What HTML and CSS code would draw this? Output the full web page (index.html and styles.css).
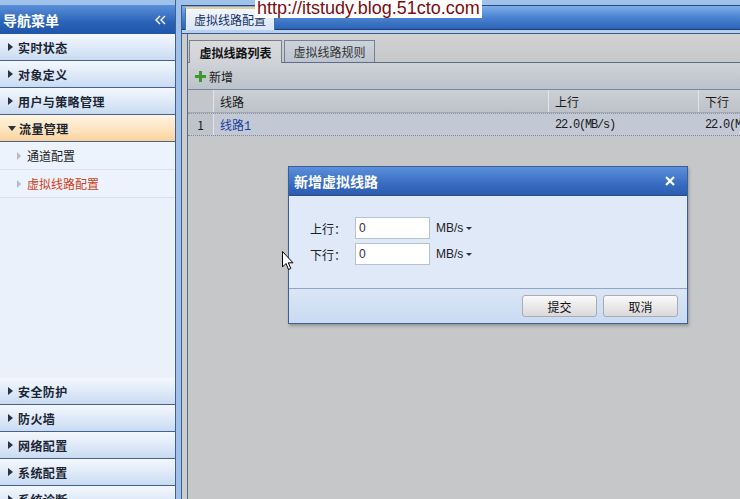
FILE: index.html
```html
<!DOCTYPE html>
<html lang="zh-CN">
<head>
    <meta charset="UTF-8">
    <title>虚拟线路配置</title>
    <link rel="stylesheet" href="styles.css">
</head>
<body>

    <div class="app">
        <!-- left navigation -->
        <aside class="sidebar">
            <div class="nav-head">
                <span>导航菜单</span>
                <svg class="collapse" width="12" height="10" viewBox="0 0 12 10">
                    <path d="M5 1 L1 5 L5 9 M10 1 L6 5 L10 9" fill="none" stroke="#fff" stroke-width="1.4"/>
                </svg>
            </div>
            <div class="nav-item"><i class="arrow"></i>实时状态</div>
            <div class="nav-item"><i class="arrow"></i>对象定义</div>
            <div class="nav-item"><i class="arrow"></i>用户与策略管理</div>
            <div class="nav-item open"><i class="arrow down"></i>流量管理</div>
            <ul class="sub-list">
                <li><i class="sub-arrow"></i>通道配置</li>
                <li class="current"><i class="sub-arrow"></i>虚拟线路配置</li>
            </ul>
            <div class="nav-fill"></div>
            <div class="nav-item"><i class="arrow"></i>安全防护</div>
            <div class="nav-item"><i class="arrow"></i>防火墙</div>
            <div class="nav-item"><i class="arrow"></i>网络配置</div>
            <div class="nav-item"><i class="arrow"></i>系统配置</div>
            <div class="nav-item"><i class="arrow"></i>系统诊断</div>
        </aside>

        <!-- main tab area -->
        <section class="main">
            <div class="tabbar">
                <div class="tab">虚拟线路配置</div>
            </div>
            <div class="tabbar-foot"></div>
            <div class="main-body">
                <div class="panel">
                    <div class="subtabs">
                        <div class="subtab active">虚拟线路列表</div>
                        <div class="subtab">虚拟线路规则</div>
                    </div>
                    <div class="toolbar">
                        <span class="tool-btn">
                            <svg width="11" height="11" viewBox="0 0 11 11">
                                <rect x="4" y="0" width="3" height="11" fill="#3c9a2c"/>
                                <rect x="0" y="4" width="11" height="3" fill="#3c9a2c"/>
                            </svg>
                            新增
                        </span>
                    </div>
                    <div class="grid">
                        <div class="grid-row grid-head">
                            <div class="cell num"></div>
                            <div class="cell c-line">线路</div>
                            <div class="cell c-up">上行</div>
                            <div class="cell c-down">下行</div>
                        </div>
                        <div class="grid-row selected">
                            <div class="cell num">1</div>
                            <div class="cell c-line"><span class="link">线路<span class="mono">1</span></span></div>
                            <div class="cell c-up mono">22.0(MB/s)</div>
                            <div class="cell c-down mono">22.0(MB/s)</div>
                        </div>
                    </div>
                </div>
            </div>
        </section>
    </div>

    <!-- add dialog -->
    <div class="dialog">
        <div class="dialog-head">
            <span>新增虚拟线路</span>
            <svg class="close" width="10" height="10" viewBox="0 0 10 10">
                <path d="M1 1 L9 9 M9 1 L1 9" stroke="#fff" stroke-width="2.2"/>
            </svg>
        </div>
        <div class="dialog-body">
            <div class="form-row">
                <label>上行：</label>
                <input type="text" value="0">
                <span class="unit">MB/s <i class="caret"></i></span>
            </div>
            <div class="form-row">
                <label>下行：</label>
                <input type="text" value="0">
                <span class="unit">MB/s <i class="caret"></i></span>
            </div>
        </div>
        <div class="dialog-foot">
            <button type="button">提交</button>
            <button type="button">取消</button>
        </div>
    </div>

    <div class="watermark">http://itstudy.blog.51cto.com</div>

    <svg class="cursor" width="12" height="20" viewBox="0 0 12 20">
        <path d="M0.5 0.5 L0.5 16 L4 12.5 L6.5 18.5 L8.8 17.5 L6.3 11.8 L11 11.8 Z" fill="#fff" stroke="#000" stroke-width="1"/>
    </svg>

</body>
</html>
```

FILE: styles.css
```css
body {
    margin: 0;
    background: #9fc1ea;
    font-family: "Noto Sans CJK SC", "Liberation Sans", sans-serif;
    font-size: 12px;
    color: #1a1a1a;
    overflow: hidden;
    height: 499px;
}

.app {
    display: flex;
    height: 513px;
}

/* ---------- sidebar ---------- */

.sidebar {
    width: 175px;
    border-right: 1px solid #3f5f8c;
    display: flex;
    flex-direction: column;
    padding-top: 5px;
    background: #9fc1ea;
}

.nav-head {
    height: 29px;
    display: flex;
    align-items: center;
    justify-content: space-between;
    padding: 0 8px 0 3px;
    background: linear-gradient(#5a90d9, #2a62b7 60%, #1f56aa);
    color: #fff;
    font-size: 14px;
    font-weight: bold;
}

.nav-item {
    height: 26px;
    border-bottom: 1px solid #44638c;
    background: linear-gradient(#f4f8fe, #dbe7f7 60%, #c9dbf2);
    display: flex;
    align-items: center;
    padding-left: 8px;
    font-weight: bold;
    font-size: 12px;
    letter-spacing: 0.4px;
    color: #1b2433;
    flex-shrink: 0;
}

.nav-item.open {
    background: linear-gradient(#fff4e2, #fde2bb 60%, #f9d29c);
}

.arrow {
    width: 0;
    height: 0;
    border-top: 4px solid transparent;
    border-bottom: 4px solid transparent;
    border-left: 5px solid #2b3240;
    margin-right: 5px;
}

.arrow.down {
    border-left: 4px solid transparent;
    border-right: 4px solid transparent;
    border-top: 5px solid #2b3240;
    border-bottom: 0;
    margin-right: 3px;
}

.sub-list {
    list-style: none;
    margin: 0;
    padding: 0;
    background: #edf3fc;
}

.sub-list li {
    height: 27px;
    border-bottom: 1px solid #d6e0ee;
    display: flex;
    align-items: center;
    padding-left: 17px;
    color: #222;
}

.sub-list li.current {
    color: #cf3f1a;
}

.sub-arrow {
    width: 0;
    height: 0;
    border-top: 4px solid transparent;
    border-bottom: 4px solid transparent;
    border-left: 4px solid #b5bcc8;
    margin-right: 6px;
}

.nav-fill {
    flex: 1;
    background: #eaf1fb;
}

/* ---------- main area ---------- */

.main {
    flex: 1;
    margin-left: 5px;
    margin-top: 5px;
    border-left: 1px solid #3f5f8c;
    border-top: 1px solid #2b4a7a;
    display: flex;
    flex-direction: column;
    overflow: hidden;
}

.tabbar {
    height: 23px;
    border-bottom: 1px solid #1f3f70;
    background: linear-gradient(#7fadea, #4a83d2 50%, #2c63b6);
    display: flex;
    align-items: flex-end;
    padding-left: 3px;
}

.tab {
    width: 90px;
    height: 23px;
    margin-bottom: -1px;
    box-sizing: border-box;
    border: 1px solid #4a6fa6;
    border-bottom: 0;
    border-top: 2px solid #e9cf8f;
    background: linear-gradient(#f2f6fc, #d9e6f7);
    color: #15325f;
    display: flex;
    align-items: center;
    justify-content: center;
}

.tabbar-foot {
    height: 3px;
    background: #b7d0f0;
    border-bottom: 1px solid #3a5886;
}

.main-body {
    flex: 1;
    background: #cbccce;
    padding-left: 5px;
    display: flex;
}

.panel {
    flex: 1;
    border-left: 1px solid #56698a;
    background: #c6c7c9;
    overflow: hidden;
}

.subtabs {
    height: 28px;
    border-bottom: 1px solid #5d6d86;
    background: linear-gradient(#d1d2d4, #c6c7c9);
    display: flex;
    align-items: flex-end;
    padding-left: 1px;
}

.subtab {
    width: 91px;
    height: 22px;
    box-sizing: border-box;
    border: 1px solid #76808e;
    border-bottom: 0;
    margin-right: 2px;
    background: linear-gradient(#cdd3dc, #bcc4cf);
    color: #333;
    display: flex;
    align-items: center;
    justify-content: center;
}

.subtab.active {
    width: 93px;
    height: 23px;
    margin-bottom: -1px;
    background: linear-gradient(#dadbdd, #cfd2d7);
    color: #111;
    font-weight: bold;
}

.toolbar {
    height: 26px;
    border-bottom: 1px solid #7a879b;
    background: linear-gradient(#cfd2d7, #bcc2cb);
    display: flex;
    align-items: center;
    padding-left: 7px;
}

.tool-btn {
    display: flex;
    align-items: center;
    gap: 3px;
    color: #1a1a1a;
}

.grid-row {
    display: flex;
    height: 23px;
    width: 700px;
    box-sizing: border-box;
}

.cell {
    box-sizing: border-box;
    display: flex;
    align-items: center;
    padding-left: 6px;
    white-space: nowrap;
}

.num {
    width: 26px;
    justify-content: flex-end;
    padding: 0 9px 0 0;
}

.c-line {
    width: 335px;
}

.c-up,
.c-down {
    width: 150px;
}

.grid-head {
    background: linear-gradient(#cdd0d5, #bdc2c9);
    border-bottom: 1px solid #a3a9b3;
}

.grid-head .cell {
    border-right: 1px solid #e2e4e8;
}

.grid-head .num {
    border-right: 1px solid #e2e4e8;
    background: #c3c6cb;
}

.selected {
    background: #c2c9d5;
    border-top: 1px dotted #8a92a0;
    border-bottom: 1px dotted #7f8796;
}

.selected .num {
    background: #bfc3ca;
    border-right: 1px solid #e0e2e6;
}

.link {
    color: #1d3f9c;
}

.mono {
    font-family: "Liberation Mono", monospace;
    letter-spacing: -1.2px;
}

/* ---------- dialog ---------- */

.dialog {
    position: absolute;
    left: 288px;
    top: 166px;
    width: 400px;
    box-sizing: border-box;
    border: 1px solid #3e5f94;
    background: #dfe8f6;
    box-shadow: 1px 2px 3px rgba(0, 0, 0, 0.25);
}

.dialog-head {
    height: 28px;
    background: linear-gradient(#5c90dc, #3a6fc4 55%, #2b5cb0);
    color: #fff;
    font-size: 14px;
    font-weight: bold;
    display: flex;
    align-items: center;
    justify-content: space-between;
    padding: 0 12px 0 5px;
    border-bottom: 1px solid #2a4f8c;
}

.dialog-body {
    height: 92px;
    box-sizing: border-box;
    padding: 21px 0 0 21px;
    background: #e0e9f7;
}

.form-row {
    display: flex;
    align-items: center;
    height: 22px;
    margin-bottom: 4px;
}

.form-row label {
    width: 45px;
    color: #222;
}

.form-row input {
    width: 75px;
    height: 22px;
    box-sizing: border-box;
    border: 1px solid #b5c2d3;
    padding: 0 3px;
    font-family: "Liberation Sans", sans-serif;
    font-size: 12px;
    color: #333;
    outline: none;
}

.unit {
    margin-left: 6px;
    font-family: "Liberation Sans", sans-serif;
    color: #222;
    display: flex;
    align-items: center;
    gap: 3px;
}

.caret {
    width: 0;
    height: 0;
    border-left: 3px solid transparent;
    border-right: 3px solid transparent;
    border-top: 3px solid #333;
}

.dialog-foot {
    height: 34px;
    border-top: 1px solid #8fa6c6;
    background: linear-gradient(#dbe6f5, #c9daf1);
    display: flex;
    align-items: center;
    justify-content: flex-end;
    gap: 6px;
    padding-right: 9px;
}

.dialog-foot button {
    width: 75px;
    height: 22px;
    border: 1px solid #a6adb8;
    border-radius: 3px;
    background: linear-gradient(#fafafa, #e6e6e6 60%, #d9d9d9);
    font-family: "Noto Sans CJK SC", sans-serif;
    font-size: 12px;
    color: #111;
    padding: 0;
}

/* ---------- overlays ---------- */

.watermark {
    position: absolute;
    left: 255px;
    top: 0;
    height: 18px;
    padding: 0 2px;
    background: #fff;
    color: #7b0c10;
    font-family: "Liberation Sans", sans-serif;
    font-size: 18px;
    line-height: 16px;
}

.cursor {
    position: absolute;
    left: 282px;
    top: 251px;
}
```
